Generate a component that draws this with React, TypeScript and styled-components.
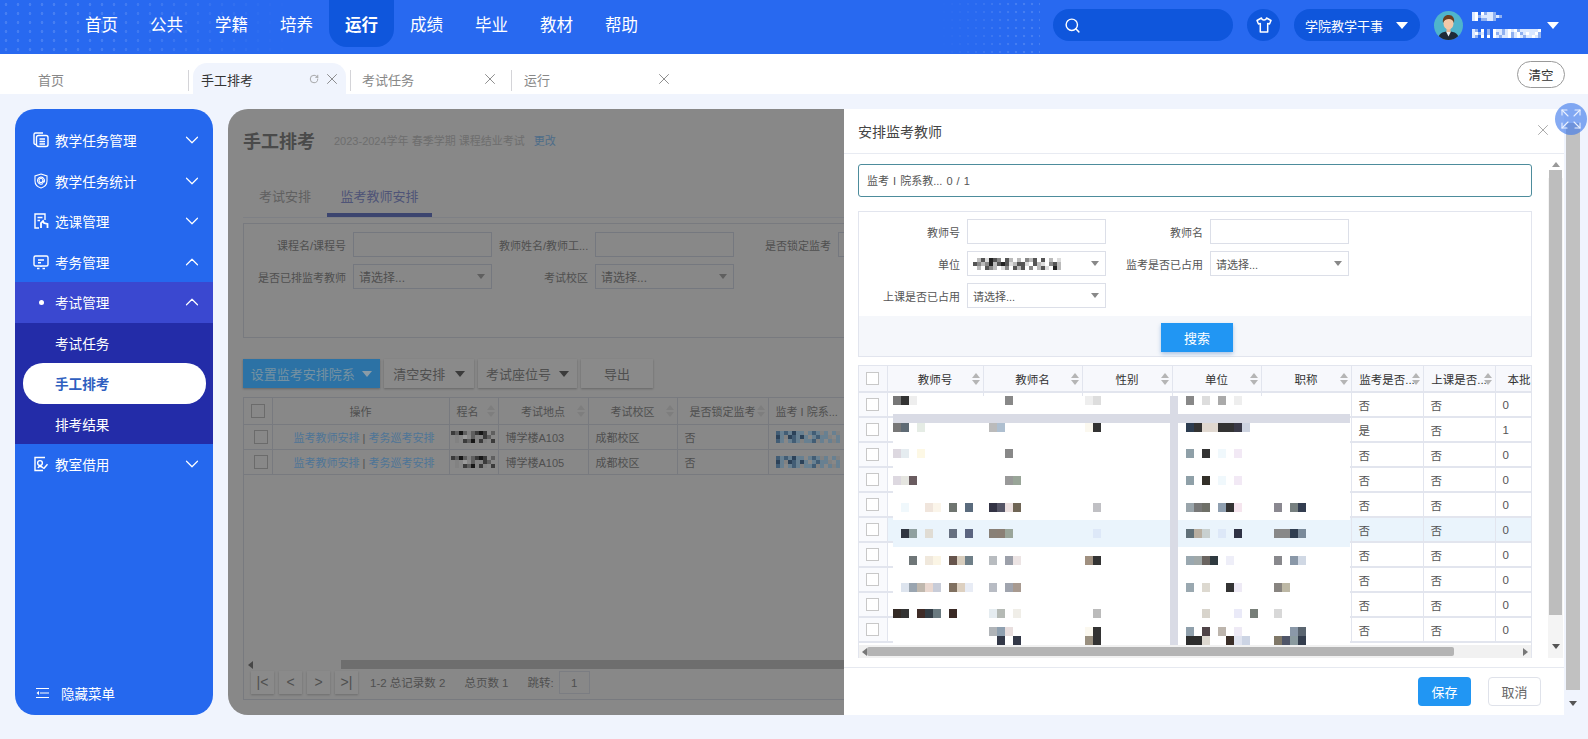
import styled, { createGlobalStyle } from 'styled-components'
import { ChevronDown, ChevronUp, Expand, RotateCw, Search, X } from 'lucide-react'

const NAV = ['首页', '公共', '学籍', '培养', '运行', '成绩', '毕业', '教材', '帮助']

// redacted table text: [y, left blocks, right blocks], index -> 8px grid
type Block = [number, string]
const MOSAIC: [number, Block[], Block[]][] = [
  [0, [[0, '#777'], [1, '#333'], [2, '#eee'], [14, '#888'], [24, '#eee'], [25, '#ddd']], [[1, '#888'], [3, '#ddd'], [5, '#aaa'], [7, '#eee']]],
  [27, [[0, '#777'], [1, '#5f6b75'], [3, '#e5ece5'], [12, '#bbb'], [13, '#aebfd0'], [24, '#fbf8ef'], [25, '#333']], [[1, '#2c3c50'], [2, '#333'], [3, '#e0d8d0'], [4, '#e0d8d0'], [5, '#333'], [6, '#333'], [7, '#3a3a48'], [8, '#cdd3e0']]],
  [53, [[0, '#ddd8e0'], [1, '#e5ecf0'], [3, '#fdf8e5'], [14, '#888']], [[1, '#8fa0a8'], [3, '#333'], [5, '#f0f8fc'], [7, '#f2e9f5']]],
  [80, [[0, '#ddd8e0'], [1, '#e5e5e0'], [2, '#6a5c60'], [14, '#999'], [15, '#99a598']], [[1, '#8fa0a8'], [3, '#333029'], [5, '#f0f8fc'], [7, '#f2e9f5']]],
  [107, [[1, '#f0f8fc'], [4, '#f0e5dc'], [5, '#fbf5ea'], [7, '#6f7570'], [9, '#5a6b7d'], [12, '#333344'], [13, '#555566'], [14, '#ece0e0'], [15, '#6f6555'], [25, '#c0c0c4']], [[1, '#9aa5ab'], [2, '#787878'], [3, '#6f7068'], [5, '#8f9fb0'], [6, '#333'], [7, '#f5e5ee'], [12, '#8a8890'], [14, '#778080'], [15, '#333d50']]],
  [133, [[1, '#2f3540'], [2, '#90a0a0'], [4, '#e0dcd4'], [7, '#667080'], [9, '#5a6480'], [12, '#888077'], [13, '#8a7f75'], [14, '#9aa59a'], [25, '#dde8f8']], [[1, '#607078'], [2, '#b8aea0'], [3, '#c8d0d0'], [5, '#dde8f8'], [7, '#2f3245'], [12, '#888'], [13, '#888'], [14, '#2f3d50'], [15, '#7a8a9a']]],
  [160, [[2, '#6f7678'], [4, '#f0e8dc'], [5, '#fbf5e5'], [7, '#66544c'], [8, '#d8cdbd'], [9, '#6f7f88'], [12, '#b8bcc0'], [14, '#9ca0aa'], [15, '#ece4e4'], [24, '#a09080'], [25, '#333']], [[1, '#9aa8b0'], [2, '#a0a8a8'], [3, '#6a6460'], [4, '#2f3a40'], [6, '#eeeef8'], [12, '#88888c'], [14, '#8a98a8'], [15, '#d0d8e4']]],
  [187, [[1, '#dde4ee'], [2, '#9aa5b0'], [3, '#c0b8ae'], [4, '#ead8d0'], [5, '#c8ccd8'], [7, '#807060'], [8, '#ddd0c0'], [9, '#e8ecf5'], [12, '#b8bcc4'], [14, '#a0a4ae'], [15, '#a89a90']], [[1, '#9aa8b0'], [3, '#ddd9d0'], [6, '#333'], [7, '#eeeaf5'], [12, '#888480'], [13, '#bdb8a5']]],
  [213, [[0, '#332a25'], [1, '#333'], [3, '#3f2c28'], [4, '#333d45'], [5, '#6a7a80'], [7, '#3a2a25'], [12, '#e5ecf0'], [13, '#b5bab5'], [15, '#f0eee8'], [25, '#bbb']], [[3, '#d8d4cc'], [7, '#eaeaf8'], [9, '#777e78'], [12, '#d8d8d8']]],
  [231, [[12, '#b0b4b8'], [13, '#8fa0b0'], [14, '#e8dede'], [24, '#fbf8ef'], [25, '#333']], [[1, '#90a0ac'], [3, '#4f4448'], [5, '#bdb5ad'], [7, '#eeeaf5'], [14, '#8a98a8'], [15, '#5a6570']]],
  [240, [[13, '#333848'], [15, '#333848'], [24, '#9a9080'], [25, '#333']], [[1, '#2d2d2d'], [2, '#2d2d2d'], [3, '#ddd8d0'], [6, '#3a2e28'], [7, '#e0e4f0'], [8, '#ccd4e4'], [12, '#807868'], [13, '#4f5568'], [14, '#8a9a9f'], [15, '#333d4d']]],
]

const TEACHER_ROWS = ['否否0', '是否1', '否否0', '否否0', '否否0', '否否0', '否否0', '否否0', '否否0', '否否0']

const PALETTE: Record<string, string> = {
  a: '#222', b: '#555', c: '#888', d: '#bbb', e: '#ddd', w: '#fff', x: '#dbe8ff', y: '#8fb0f0', p: '#5f86a8', q: '#96b8d0', r: '#3f5f80',
}

const Pixels = ({ rows, cell }: { rows: string[]; cell: number }) => (
  <svg width={rows[0].length * cell} height={rows.length * cell} style={{ display: 'block' }}>
    {rows.map((row, y) =>
      row.split('').map((ch, x) =>
        PALETTE[ch] ? <rect key={`${x}-${y}`} x={x * cell} y={y * cell} width={cell} height={cell} fill={PALETTE[ch]} /> : null,
      ),
    )}
  </svg>
)

const stroke = { fill: 'none', stroke: '#fff', strokeWidth: 1.4 }

const TaskIcon = () => (
  <svg width="16" height="16" viewBox="0 0 16 16" {...stroke}>
    <path d="M3 12.5H2.5A1.5 1.5 0 0 1 1 11V2.5A1.5 1.5 0 0 1 2.5 1H10" />
    <rect x="3.5" y="3.5" width="11.5" height="11" rx="2" />
    <path d="M6.5 7h5.5M6.5 9.5h5.5M6.5 12h5.5" />
  </svg>
)
const ShieldIcon = () => (
  <svg width="16" height="16" viewBox="0 0 16 16" fill="none" stroke="#fff" strokeWidth="1.1">
    <path d="M8 1l6 2v5c0 3.5-2.6 6-6 7-3.4-1-6-3.5-6-7V3z" />
    <circle cx="8" cy="7.5" r="2" />
    <path d="M10 7.500v1c0 1 1.500 1 1.500-.6A3.500 3.500 0 1 0 10 10.500" />
  </svg>
)
const PickIcon = () => (
  <svg width="16" height="16" viewBox="0 0 16 16" {...stroke}>
    <path d="M6 15H2V1h10v6" />
    <path d="M4.5 4.5h5M4.5 7.5h2.5" />
    <path d="M8 15v-5l2-2 1 2 3.5 1v4" strokeWidth="1.8" />
  </svg>
)
const ExamIcon = () => (
  <svg width="16" height="16" viewBox="0 0 16 16" {...stroke}>
    <rect x="1" y="2" width="14" height="10" rx="1.5" />
    <path d="M5 6h6M5 8.8h3M4 14.5h2.5M9.5 14.5H12M8 12v1" />
  </svg>
)
const RoomIcon = () => (
  <svg width="16" height="16" viewBox="0 0 16 16" {...stroke}>
    <path d="M12 1.5H2v13h8" />
    <circle cx="7" cy="7" r="2.4" />
    <path d="M5 12c.5-2 3.5-2 4.5-.5l1.5.8 3.5-4" />
  </svg>
)
const ShirtIcon = () => (
  <svg width="18" height="18" viewBox="0 0 18 18" fill="none" stroke="#fff" strokeWidth="1.5" strokeLinejoin="round">
    <path d="M6.5 2L2 4.5 3.5 8l1.8-.6V16h7.4V7.4l1.8.6L16 4.5 11.500 2c-.4 2.800-4.600 2.800-5 0z" />
  </svg>
)
const HideIcon = () => (
  <svg width="13" height="10" viewBox="0 0 13 10" fill="none" stroke="#fff" strokeWidth="1">
    <path d="M0 .5h13M4 5h9M0 9.500h13" />
    <path d="M3 3v4L.5 5z" fill="#fff" stroke="none" />
  </svg>
)
const Avatar = () => (
  <svg width="29" height="29" viewBox="0 0 29 29">
    <clipPath id="avatar-clip"><circle cx="14.500" cy="14.500" r="14.500" /></clipPath>
    <g clipPath="url(#avatar-clip)">
      <rect width="29" height="29" fill="#4fb4cc" />
      <path d="M4 29c0-6 4-8.500 10.500-8.500S25 23 25 29z" fill="#1f2a38" />
      <path d="M12 20.500h5l-2.500 5z" fill="#e9eef2" />
      <rect x="12.500" y="16" width="4" height="5" fill="#e8b795" />
      <ellipse cx="14.500" cy="12.500" rx="5" ry="6" fill="#f2c8a8" />
      <path d="M9 12c-1-6 3-8.500 6-8 3.500 0 6 3 5 8-1-3-2.500-4-5-4-3 0-5 1.500-6 4z" fill="#6b3f20" />
    </g>
  </svg>
)

const Caret = styled.i<{ $color?: string; $size?: number }>`
  display: inline-block;
  flex: none;
  width: 0;
  height: 0;
  border-left: ${p => p.$size ?? 6}px solid transparent;
  border-right: ${p => p.$size ?? 6}px solid transparent;
  border-top: ${p => (p.$size ?? 6) + 1}px solid ${p => p.$color ?? '#fff'};
`

const SortIcon = () => (
  <SortWrap>
    <SortUp />
    <SortDown />
  </SortWrap>
)

const TabClose = () => <X size={18} color="#777" strokeWidth={1.1} />

const MENU = [
  { label: '教学任务管理', icon: <TaskIcon /> },
  { label: '教学任务统计', icon: <ShieldIcon /> },
  { label: '选课管理', icon: <PickIcon /> },
]

const Down = () => <ChevronDown size={22} strokeWidth={1.3} />
const Up = () => <ChevronUp size={22} strokeWidth={1.3} />

export default function App() {
  return (
    <Page>
      <GlobalStyle />
      <Header>
        <NavList>
          {NAV.map(name => (
            <NavItem key={name} $active={name === '运行'}>{name}</NavItem>
          ))}
        </NavList>
        <HeaderRight>
          <SearchBox><Search size={17} color="#fff" /></SearchBox>
          <ShirtButton><ShirtIcon /></ShirtButton>
          <RolePill>学院教学干事<Caret /></RolePill>
          <Avatar />
          <UserBlock>
            <Pixels cell={3} rows={['xw.wyxxy..', 'xwyxxxxyxy', 'xw.yyxxy..']} />
            <Pixels cell={3} rows={['xy.w.y.wxxyxwxwyxxxxxxw', 'xwyx.y.wyxyxwyxwyxwxxwy', 'xy.w.w.wxyxxwyxwxyxxwxy']} />
          </UserBlock>
          <Caret />
        </HeaderRight>
      </Header>

      <TabStrip>
        <Tab $width={158}>首页</Tab>
        <TabSep />
        <ActiveTab>
          手工排考
          <TabTools>
            <RotateCw size={10} color="#999" />
            <TabClose />
          </TabTools>
        </ActiveTab>
        <TabSep />
        <Tab $width={160} $inset={11}>考试任务<TabTools><TabClose /></TabTools></Tab>
        <TabSep />
        <Tab $width={173} $inset={12}>运行<TabTools><TabClose /></TabTools></Tab>
        <ClearButton>清空</ClearButton>
      </TabStrip>

      <Content>
        <Sidebar>
          {MENU.map(m => (
            <MenuRow key={m.label}>
              <MenuIcon>{m.icon}</MenuIcon>
              {m.label}
              <MenuChevron><Down /></MenuChevron>
            </MenuRow>
          ))}
          <MenuRow>
            <MenuIcon><ExamIcon /></MenuIcon>
            考务管理
            <MenuChevron><Up /></MenuChevron>
          </MenuRow>
          <SubHeadRow>
            <MenuIcon><Dot /></MenuIcon>
            考试管理
            <MenuChevron><Up /></MenuChevron>
          </SubHeadRow>
          <SubList>
            <SubRow>考试任务</SubRow>
            <SubRow $active>手工排考</SubRow>
            <SubRow>排考结果</SubRow>
          </SubList>
          <MenuRow>
            <MenuIcon><RoomIcon /></MenuIcon>
            教室借用
            <MenuChevron><Down /></MenuChevron>
          </MenuRow>
          <SideFoot><HideIcon />隐藏菜单</SideFoot>
        </Sidebar>

        <MainPanel>
          <PanelBody>
            <TitleRow>
              <PanelTitle>手工排考</PanelTitle>
              <PanelSub>2023-2024学年 春季学期 课程结业考试</PanelSub>
              <PanelLink>更改</PanelLink>
            </TitleRow>
            <PanelTabs>
              <PanelTab>考试安排</PanelTab>
              <PanelTab $active>监考教师安排</PanelTab>
            </PanelTabs>
            <PanelFilter>
              <PanelGrid>
                <DimLabel>课程名/课程号</DimLabel><DimInput />
                <DimLabel>教师姓名/教师工...</DimLabel><DimInput />
                <DimLabel>是否锁定监考</DimLabel><DimInput />
                <DimLabel>是否已排监考教师</DimLabel>
                <DimInput>请选择...<Caret $size={4} $color="#888" /></DimInput>
                <DimLabel>考试校区</DimLabel>
                <DimInput>请选择...<Caret $size={4} $color="#888" /></DimInput>
              </PanelGrid>
            </PanelFilter>
            <ActionRow>
              <ActionPrimary>设置监考安排院系<Caret $size={5} $color="#c8e0f0" /></ActionPrimary>
              <ActionButton $width={90}>清空安排<Caret $size={5} $color="#555" /></ActionButton>
              <ActionButton $width={99}>考试座位号<Caret $size={5} $color="#555" /></ActionButton>
              <ActionButton $width={72}>导出</ActionButton>
            </ActionRow>
            <PanelTableBox>
              <DimTable>
                <colgroup>
                  <col width={28} /><col width={177} /><col width={49} /><col width={90} /><col width={89} /><col width={91} /><col width={120} />
                </colgroup>
                <thead>
                  <tr>
                    <DimTh><DimCheck /></DimTh>
                    <DimTh>操作</DimTh>
                    <DimTh $left>程名<SortIcon /></DimTh>
                    <DimTh>考试地点<SortIcon /></DimTh>
                    <DimTh>考试校区<SortIcon /></DimTh>
                    <DimTh>是否锁定监考<SortIcon /></DimTh>
                    <DimTh $left>监考 I 院系...</DimTh>
                  </tr>
                </thead>
                <tbody>
                  {['博学楼A103', '博学楼A105'].map(place => (
                    <tr key={place}>
                      <DimTd><DimCheck /></DimTd>
                      <DimTd $center><DimLink>监考教师安排</DimLink> | <DimLink>考务巡考安排</DimLink></DimTd>
                      <DimTd $tight><Pixels cell={4} rows={['bcacdcbab.c', '.d.e.cddbc.', '.d.bcadbd.b']} /></DimTd>
                      <DimTd>{place}</DimTd>
                      <DimTd>成都校区</DimTd>
                      <DimTd>否</DimTd>
                      <DimTd><Pixels cell={4} rows={['pqpqrqq.qpqdq.qd', 'rqdrpqrq.qpqqd.q', 'pq.qpqdqqpdq.qdq']} /></DimTd>
                    </tr>
                  ))}
                </tbody>
              </DimTable>
              <DimScrollBar><ScrollArrow $dir="left" $color="#666" /><DimThumb /></DimScrollBar>
              <Pager>
                <PagerButton>|&lt;</PagerButton>
                <PagerButton>&lt;</PagerButton>
                <PagerButton>&gt;</PagerButton>
                <PagerButton>&gt;|</PagerButton>
                <PagerText>1-2 总记录数 2</PagerText>
                <PagerText>总页数 1</PagerText>
                <PagerText>跳转:</PagerText>
                <PagerInput>1</PagerInput>
              </Pager>
            </PanelTableBox>
          </PanelBody>
          <Mask />

          <Drawer>
            <DrawerHead>
              安排监考教师
              <DrawerClose><X size={18} color="#999" strokeWidth={1.1} /></DrawerClose>
            </DrawerHead>
            <DrawerBody>
              <DrawerMain>
                <QuotaBox>监考 I 院系教... 0 / 1</QuotaBox>
                <FilterBox>
                  <FilterGrid>
                    <FieldLabel>教师号</FieldLabel><FieldInput />
                    <FieldLabel>教师名</FieldLabel><FieldInput />
                    <FieldLabel>单位</FieldLabel>
                    <FieldInput>
                      <Pixels cell={4} rows={['.dbeabc.bd.d.cdb.b.d.e', 'bcdcadbabedbbe.bde.cbd', '.d.bcd.ec.bdb.c.dbe.ad']} />
                      <Caret $size={4} $color="#888" />
                    </FieldInput>
                    <FieldLabel>监考是否已占用</FieldLabel>
                    <FieldInput>请选择...<Caret $size={4} $color="#888" /></FieldInput>
                    <FieldLabel>上课是否已占用</FieldLabel>
                    <FieldInput>请选择...<Caret $size={4} $color="#888" /></FieldInput>
                  </FilterGrid>
                  <SearchBand><SearchButton>搜索</SearchButton></SearchBand>
                </FilterBox>

                <TableBox>
                  <TableClip>
                    <TeacherTable>
                      <colgroup>
                        <col width={28} /><col width={96} /><col width={99} /><col width={90} /><col width={89} /><col width={90} /><col width={72} /><col width={72} /><col width={60} />
                      </colgroup>
                      <thead>
                        <tr>
                          <Th><CheckBox /></Th>
                          <Th>教师号<SortIcon /></Th>
                          <Th>教师名<SortIcon /></Th>
                          <Th>性别<SortIcon /></Th>
                          <Th>单位<SortIcon /></Th>
                          <Th>职称<SortIcon /></Th>
                          <Th>监考是否...<SortIcon /></Th>
                          <Th>上课是否...<SortIcon /></Th>
                          <Th $left>本批</Th>
                        </tr>
                      </thead>
                      <tbody>
                        {TEACHER_ROWS.map((row, i) => (
                          <Tr key={i} $hover={i === 5}>
                            <Td><CheckBox /></Td>
                            <Td /><Td /><Td /><Td /><Td />
                            <Td>{row[0]}</Td>
                            <Td>{row[1]}</Td>
                            <Td>{row[2]}</Td>
                          </Tr>
                        ))}
                      </tbody>
                    </TeacherTable>
                    <MosaicLayer width="457" height="249" viewBox="0 0 457 249">
                      <rect width="457" height="249" fill="#fff" />
                      <rect y="124" width="457" height="27" fill="#eaf4fc" />
                      {MOSAIC.map(([y, left, right]) => (
                        <g key={y}>
                          {left.map(([i, c]) => <rect key={i} x={i * 8} y={y} width="8" height="9" fill={c} />)}
                          {right.map(([i, c]) => <rect key={i} x={285 + i * 8} y={y} width="8" height="9" fill={c} />)}
                        </g>
                      ))}
                      <rect y="18" width="457" height="9" fill="#d9dbe5" />
                      <rect x="277" width="8" height="249" fill="#d9dbe5" />
                    </MosaicLayer>
                  </TableClip>
                  <HScroll>
                    <ScrollArrow $dir="left" $color="#777" />
                    <HThumb />
                    <ScrollArrow $dir="right" $color="#777" />
                  </HScroll>
                </TableBox>
              </DrawerMain>
              <VScroll>
                <ScrollArrow $dir="up" $color="#999" />
                <VThumb />
                <ScrollArrow $dir="down" $color="#555" />
              </VScroll>
            </DrawerBody>
            <DrawerFoot>
              <SaveButton>保存</SaveButton>
              <CancelButton>取消</CancelButton>
            </DrawerFoot>
          </Drawer>
        </MainPanel>

        <PageScroll>
          <PageThumb />
          <ScrollArrow $dir="down" $color="#555" />
        </PageScroll>
        <FloatButton><Expand size={24} color="#eaf1ff" strokeWidth={1.1} /></FloatButton>
      </Content>
    </Page>
  )
}

const GlobalStyle = createGlobalStyle`
  html, body {
    margin: 0;
    height: 100%;
    overflow: hidden;
    background: #f0f4fd;
  }
  * {
    box-sizing: border-box;
  }
`

const Page = styled.div`
  height: 739px;
  background: #f0f4fd;
  font-family: "Liberation Sans", "Noto Sans CJK SC", sans-serif;
  color: #333;
`

const Header = styled.header`
  position: relative;
  display: flex;
  align-items: flex-start;
  height: 54px;
  padding: 0 29px 0 69px;
  background: #2869f0;
  overflow: hidden;

  &::before,
  &::after {
    content: '';
    position: absolute;
    top: 0;
    bottom: 0;
    background-image: radial-gradient(circle, rgba(255, 255, 255, 0.14) 1.2px, transparent 1.6px);
    pointer-events: none;
  }
  &::before {
    left: 0;
    width: 300px;
    background-size: 12px 9px;
    mask-image: linear-gradient(to right, #000 30%, transparent);
  }
  &::after {
    left: 940px;
    width: 100px;
    background-size: 8px 8px;
    mask-image: linear-gradient(to left, #000 20%, transparent);
  }
`

const NavList = styled.nav`
  position: relative;
  z-index: 1;
  display: flex;
`

const NavItem = styled.a<{ $active?: boolean }>`
  width: 65px;
  height: 47px;
  padding-top: 13px;
  text-align: center;
  color: #fff;
  font-size: 16.5px;
  line-height: 24px;
  border-radius: 0 0 18px 18px;
  background: ${p => (p.$active ? '#0f56dc' : 'transparent')};
  font-weight: ${p => (p.$active ? 700 : 400)};
`

const HeaderRight = styled.div`
  position: relative;
  z-index: 1;
  display: flex;
  align-items: center;
  height: 50px;
  margin-left: auto;
`

const SearchBox = styled.div`
  display: flex;
  align-items: center;
  width: 180px;
  height: 32px;
  padding-left: 11px;
  border-radius: 16px;
  background: #0f56dc;
`

const ShirtButton = styled.div`
  display: flex;
  align-items: center;
  justify-content: center;
  width: 33px;
  height: 32px;
  margin: 0 14px;
  border-radius: 50%;
  background: #0f56dc;
`

const RolePill = styled.div`
  display: flex;
  align-items: center;
  justify-content: space-between;
  width: 126px;
  height: 32px;
  margin-right: 14px;
  padding: 0 12px 0 11px;
  border-radius: 16px;
  background: #0f56dc;
  color: #fff;
  font-size: 13px;
`

const UserBlock = styled.div`
  display: flex;
  flex-direction: column;
  gap: 8px;
  width: 69px;
  margin: 0 6px 0 9px;
`

const TabStrip = styled.div`
  display: flex;
  align-items: flex-end;
  height: 40px;
  padding-left: 30px;
  background: #fff;
`

const Tab = styled.div<{ $width: number; $inset?: number }>`
  display: flex;
  align-items: center;
  width: ${p => p.$width}px;
  height: 31px;
  padding: 1px 12px 0 ${p => p.$inset ?? 8}px;
  font-size: 13px;
  color: #888;
`

const ActiveTab = styled(Tab).attrs({ $width: 153 })`
  margin: 0 4px;
  padding-right: 5px;
  color: #333;
  background: #f0f4fd;
  border-radius: 14px 14px 0 0;
`

const TabTools = styled.span`
  display: flex;
  align-items: center;
  gap: 4px;
  margin-left: auto;
`

const TabSep = styled.span`
  flex: none;
  width: 1px;
  height: 21px;
  margin-bottom: 3px;
  background: #d4d4d8;
`

const ClearButton = styled.button`
  align-self: center;
  width: 48px;
  height: 27px;
  margin: 0 23px 0 auto;
  padding: 0;
  border: 1px solid #999;
  border-radius: 14px;
  background: #fff;
  color: #333;
  font: inherit;
  font-size: 12.5px;
`

const Content = styled.main`
  position: relative;
  display: flex;
  height: 621px;
  padding: 15px 0 0 15px;
`

const Sidebar = styled.aside`
  flex: none;
  display: flex;
  flex-direction: column;
  width: 198px;
  height: 606px;
  margin-right: 15px;
  padding-top: 11px;
  border-radius: 20px;
  background: #2568ee;
  color: #fff;
  overflow: hidden;
`

const MenuRow = styled.div`
  display: flex;
  align-items: center;
  flex: none;
  height: 40.5px;
  padding-left: 18px;
  font-size: 13.6px;
`

const SubHeadRow = styled(MenuRow)`
  background: #3a48d0;
`

const MenuIcon = styled.span`
  display: flex;
  justify-content: center;
  width: 16px;
  margin-right: 6px;
`

const MenuChevron = styled.span`
  display: flex;
  margin: 0 10px 0 auto;
`

const Dot = styled.i`
  width: 5px;
  height: 5px;
  border-radius: 50%;
  background: #fff;
`

const SubList = styled.div`
  flex: none;
  background: #232ca8;
`

const SubRow = styled.div<{ $active?: boolean }>`
  display: flex;
  align-items: center;
  height: 40.5px;
  margin: 0 7px 0 8px;
  padding-left: 32px;
  border-radius: 20px;
  font-size: 13.6px;
  color: ${p => (p.$active ? '#2f5fc0' : '#fff')};
  background: ${p => (p.$active ? '#fff' : 'transparent')};
  font-weight: ${p => (p.$active ? 700 : 400)};
`

const SideFoot = styled.div`
  display: flex;
  align-items: center;
  gap: 12px;
  margin-top: auto;
  padding: 0 0 12px 21px;
  font-size: 13.5px;
`

const MainPanel = styled.section`
  position: relative;
  flex: none;
  width: 1336px;
  height: 606px;
  border-radius: 20px 0 0 20px;
  background: #c3c3c3;
  overflow: hidden;
`

const PanelBody = styled.div`
  width: 1320px;
  padding: 18px 0 0 15px;
`

const TitleRow = styled.div`
  display: flex;
  align-items: center;
  height: 26px;
`

const PanelTitle = styled.h1`
  margin: 0 19px 0 0;
  font-size: 18px;
  font-weight: 700;
  color: #6a6a6a;
`

const PanelSub = styled.span`
  font-size: 11px;
  color: #9e9e9e;
`

const PanelLink = styled.a`
  margin-left: 9px;
  font-size: 11px;
  color: #6f9cc4;
`

const PanelTabs = styled.div`
  display: flex;
  height: 38px;
  margin-top: 27px;
  border-bottom: 1px solid #b5b8bf;
`

const PanelTab = styled.div<{ $active?: boolean }>`
  display: flex;
  align-items: center;
  justify-content: center;
  width: ${p => (p.$active ? 105 : 84)}px;
  padding-bottom: 3px;
  border-bottom: 4px solid ${p => (p.$active ? '#5763a0' : 'transparent')};
  font-size: 13px;
  color: ${p => (p.$active ? '#7179ab' : '#8a8a8a')};
`

const PanelFilter = styled.div`
  height: 115px;
  margin-top: 5px;
  padding-top: 8px;
  border: 1px solid #acafb6;
`

const PanelGrid = styled.div`
  display: grid;
  grid-template-columns: 102px 139px 89px 139px 90px 139px;
  grid-auto-rows: 25px;
  gap: 7px;
`

const DimLabel = styled.div`
  align-self: center;
  text-align: right;
  font-size: 11px;
  color: #727272;
  white-space: nowrap;
`

const DimInput = styled.div`
  display: flex;
  align-items: center;
  justify-content: space-between;
  padding: 0 6px 0 5px;
  border: 1px solid #a8acb6;
  font-size: 12px;
  color: #727272;
`

const ActionRow = styled.div`
  display: flex;
  gap: 4px;
  margin-top: 21px;
`

const ActionButton = styled.div<{ $width: number }>`
  display: flex;
  align-items: center;
  justify-content: space-evenly;
  width: ${p => p.$width}px;
  height: 29px;
  background: #c6c6c6;
  box-shadow: 0 1px 2px rgba(0, 0, 0, 0.25);
  font-size: 13px;
  color: #727272;
`

const ActionPrimary = styled(ActionButton).attrs({ $width: 137 })`
  background: #3fa4ec;
  color: #a8d0e8;
`

const PanelTableBox = styled.div`
  display: flex;
  flex-direction: column;
  height: 303px;
  margin-top: 9px;
  border: 1px solid #acafb6;
`

const DimTable = styled.table`
  width: 644px;
  table-layout: fixed;
  border-collapse: collapse;
  font-size: 11px;
  color: #727272;
`

const DimTh = styled.th<{ $left?: boolean }>`
  position: relative;
  height: 26px;
  padding: ${p => (p.$left ? '0 0 0 7px' : '0')};
  border-right: 1px solid #acafb6;
  border-bottom: 1px solid #acafb6;
  font-weight: 400;
  text-align: ${p => (p.$left ? 'left' : 'center')};
  white-space: nowrap;
`

const DimTd = styled.td<{ $center?: boolean; $tight?: boolean }>`
  height: 25px;
  padding: ${p => (p.$tight ? '0 0 0 1px' : '0 0 0 7px')};
  border-right: 1px solid #acafb6;
  border-bottom: 1px solid #acafb6;
  text-align: ${p => (p.$center ? 'center' : 'left')};
  white-space: nowrap;
`

const DimLink = styled.a`
  color: #71a8d8;
`

const DimCheck = styled.i`
  display: block;
  width: 14px;
  height: 14px;
  margin: 0 auto;
  border: 1px solid #9a9a9a;
`

const DimScrollBar = styled.div`
  display: flex;
  align-items: center;
  height: 9px;
  margin-top: auto;
  padding-left: 4px;
`

const DimThumb = styled.span`
  width: 1100px;
  height: 9px;
  margin-left: 88px;
  background: #9e9e9e;
`

const Pager = styled.div`
  display: flex;
  align-items: center;
  height: 30px;
  padding: 0 0 4px 7px;
  font-size: 11.5px;
  color: #727272;
`

const PagerButton = styled.span`
  display: flex;
  align-items: center;
  justify-content: center;
  width: 23px;
  height: 23px;
  margin-right: 5px;
  background: #c6c6c6;
  box-shadow: 0 1px 2px rgba(0, 0, 0, 0.2);
  font-size: 14px;
`

const PagerText = styled.span`
  margin: 0 0 0 7px;
  padding-right: 12px;
`

const PagerInput = styled.span`
  width: 31px;
  height: 23px;
  line-height: 23px;
  margin-left: -7px;
  text-align: center;
  border: 1px solid #b0b3ba;
`

const Mask = styled.div`
  position: absolute;
  inset: 0;
  background: rgba(0, 0, 0, 0.3);
`

const Drawer = styled.div`
  position: absolute;
  top: 0;
  right: 0;
  bottom: 0;
  display: flex;
  flex-direction: column;
  width: 720px;
  background: #fff;
`

const DrawerHead = styled.div`
  position: relative;
  display: flex;
  align-items: center;
  flex: none;
  height: 45px;
  padding-left: 14px;
  border-bottom: 1px solid #e8ebf2;
  font-size: 14px;
  color: #444;
`

const DrawerClose = styled.span`
  position: absolute;
  top: 12px;
  right: 12px;
  display: flex;
`

const DrawerBody = styled.div`
  display: flex;
  flex: none;
  height: 513px;
  padding-left: 14px;
`

const DrawerMain = styled.div`
  width: 674px;
  padding-top: 10px;
`

const QuotaBox = styled.div`
  display: flex;
  align-items: center;
  height: 33px;
  padding: 0 0 2px 8px;
  border: 1px solid #4d8c9c;
  border-radius: 3px;
  font-size: 11px;
  color: #555;
  word-spacing: 1px;
`

const FilterBox = styled.div`
  height: 146px;
  margin-top: 14px;
  border: 1px solid #e2e5ee;
`

const FilterGrid = styled.div`
  display: grid;
  grid-template-columns: 101px 139px 90px 139px;
  grid-auto-rows: 25px;
  gap: 7px;
  height: 104px;
  padding-top: 7px;
`

const FieldLabel = styled.div`
  align-self: center;
  text-align: right;
  font-size: 11px;
  color: #555;
`

const FieldInput = styled.div`
  display: flex;
  align-items: center;
  justify-content: space-between;
  padding: 0 6px 0 5px;
  border: 1px solid #dcdfe8;
  font-size: 11px;
  color: #555;
`

const SearchBand = styled.div`
  display: flex;
  justify-content: center;
  align-items: center;
  height: 40px;
  padding: 2px 0 0 4px;
  background: #f5f7fb;
`

const SearchButton = styled.button`
  width: 72px;
  height: 29px;
  padding: 0;
  border: 0;
  background: #2196f3;
  color: #fff;
  box-shadow: 0 2px 4px rgba(33, 100, 180, 0.35);
  font: inherit;
  font-size: 13px;
`

const TableBox = styled.div`
  margin-top: 8px;
  border: solid #e2e5ee;
  border-width: 1px 1px 0;
`

const TableClip = styled.div`
  position: relative;
  height: 279px;
  overflow: hidden;
`

const TeacherTable = styled.table`
  width: 696px;
  table-layout: fixed;
  border-collapse: collapse;
  font-size: 11.5px;
  color: #555;
`

const Th = styled.th<{ $left?: boolean }>`
  position: relative;
  height: 26px;
  padding: ${p => (p.$left ? '0 0 0 12px' : '0')};
  background: #f7f8fc;
  border-right: 1px solid #e2e5ee;
  border-bottom: 2px solid #e2e5ee;
  font-weight: 400;
  color: #333;
  text-align: ${p => (p.$left ? 'left' : 'center')};
  white-space: nowrap;
`

const Tr = styled.tr<{ $hover?: boolean }>`
  background: ${p => (p.$hover ? '#eaf4fc' : '#fff')};
`

const Td = styled.td`
  height: 25px;
  padding: 0 0 0 7px;
  border-right: 1px solid #e2e5ee;
  border-bottom: 2px solid #e2e5ee;
  vertical-align: middle;

  &:first-child {
    padding: 0;
    background: #f9fafd;
  }
`

const CheckBox = styled.i`
  display: block;
  width: 13px;
  height: 13px;
  margin: 0 auto 1px;
  border: 1px solid #c8c8c8;
  background: #fff;
`

const MosaicLayer = styled.svg`
  position: absolute;
  top: 30px;
  left: 34px;
`

const SortWrap = styled.span`
  position: absolute;
  top: 50%;
  right: 3px;
  display: flex;
  flex-direction: column;
  gap: 2px;
  transform: translateY(-50%);
`

const SortUp = styled.i`
  width: 0;
  height: 0;
  border-left: 4px solid transparent;
  border-right: 4px solid transparent;
  border-bottom: 5px solid #b5b5b5;
`

const SortDown = styled.i`
  width: 0;
  height: 0;
  border-left: 4px solid transparent;
  border-right: 4px solid transparent;
  border-top: 5px solid #b5b5b5;
`

const HScroll = styled.div`
  display: flex;
  align-items: center;
  justify-content: space-between;
  height: 13px;
  padding: 0 3px;
  background: #f1f1f1;
`

const HThumb = styled.span`
  width: 587px;
  height: 9px;
  margin-right: 69px;
  background: #b4b4b4;
  border-radius: 2px;
`

const ScrollArrow = styled.i<{ $dir: 'up' | 'down' | 'left' | 'right'; $color: string }>`
  flex: none;
  width: 0;
  height: 0;
  border: 4px solid transparent;
  ${p =>
    p.$dir === 'up' ? `border-bottom: 5px solid ${p.$color}; border-top: 0;`
    : p.$dir === 'down' ? `border-top: 5px solid ${p.$color}; border-bottom: 0;`
    : p.$dir === 'left' ? `border-right: 5px solid ${p.$color}; border-left: 0;`
    : `border-left: 5px solid ${p.$color}; border-right: 0;`}
`

const VScroll = styled.div`
  display: flex;
  flex-direction: column;
  align-items: center;
  flex: none;
  width: 15px;
  height: 498px;
  margin: 6px 0 0 16px;
  padding: 2px 0 6px;
  background: linear-gradient(to bottom, #fff 18px, #f4f4f4 18px);
`

const VThumb = styled.span`
  flex: none;
  width: 13px;
  height: 445px;
  margin: 3px 0 29px;
  background: #bdbdbd;
`

const DrawerFoot = styled.div`
  display: flex;
  justify-content: flex-end;
  align-items: center;
  gap: 17px;
  flex: 1;
  padding-right: 23px;
  border-top: 1px solid #e6e9f0;
`

const SaveButton = styled.button`
  width: 53px;
  height: 29px;
  padding: 0;
  border: 0;
  border-radius: 4px;
  background: #2196f3;
  color: #fff;
  font: inherit;
  font-size: 13px;
`

const CancelButton = styled(SaveButton)`
  border: 1px solid #dfe2ea;
  background: #fff;
  color: #666;
`

const PageScroll = styled.div`
  display: flex;
  flex-direction: column;
  align-items: center;
  flex: none;
  width: 15px;
  height: 606px;
  margin-left: 1px;
  padding: 14px 0 5px;
`

const PageThumb = styled.span`
  width: 14px;
  height: 567px;
  margin-bottom: 11px;
  background: #c1c1c1;
`

const FloatButton = styled.div`
  position: absolute;
  top: 9px;
  right: 1px;
  display: flex;
  align-items: center;
  justify-content: center;
  width: 32px;
  height: 32px;
  border-radius: 50%;
  background: rgba(60, 120, 235, 0.62);
`
